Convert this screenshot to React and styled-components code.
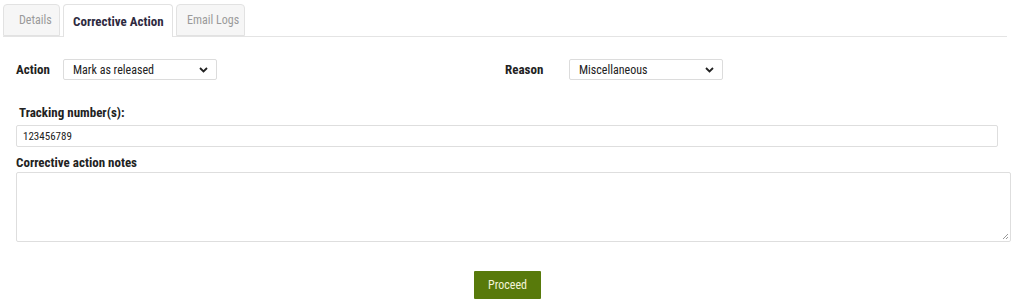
import React from 'react'
import styled, { createGlobalStyle } from 'styled-components'

const Global = createGlobalStyle`
  body {
    margin: 0;
    background: #fff;
    font-family: Roboto, "Liberation Sans", sans-serif;
    font-stretch: condensed;
    font-size: 12px;
    color: #333;
  }
`

const Page = styled.div`
  padding: 4px 6px 0 3px;
`

const TabBar = styled.div`
  display: flex;
  gap: 3px;
  border-bottom: 1px solid #e4e4e4;
  margin-right: 11px;
  height: 32px;
`

const Tab = styled.div`
  box-sizing: border-box;
  width: ${p => p.w}px;
  height: ${p => (p.active ? '33px' : '32px')};
  display: flex;
  align-items: center;
  padding-left: ${p => p.pl}px;
  border: 1px solid #e2e2e2;
  border-bottom: ${p => (p.active ? 'none' : '1px solid #e2e2e2')};
  border-radius: 4px 4px 0 0;
  background: ${p => (p.active ? '#fff' : '#f6f6f6')};
  color: ${p => (p.active ? '#2e2a40' : '#9a9a9a')};
  font-weight: ${p => (p.active ? 'bold' : 'normal')};
  font-size: ${p => (p.active ? '13px' : '12px')};
`

const Body = styled.div`
  padding: 0 8px 0 13px;
`

const TopRow = styled.div`
  display: flex;
  align-items: center;
  margin-top: 22px;
`

const Field = styled.div`
  display: flex;
  align-items: center;
  width: ${p => p.w || 'auto'};
`

const InlineLabel = styled.label`
  font-weight: bold;
  font-size: 13px;
  color: #222;
  width: ${p => p.w}px;
`

const SelectBox = styled.div`
  box-sizing: border-box;
  width: 154px;
  height: 21px;
  border: 1px solid #dcdcdc;
  border-radius: 2px;
  display: flex;
  align-items: center;
  justify-content: space-between;
  padding: 0 8px 0 9px;
  color: #222;
`

const Chevron = () => (
  <svg width="9" height="6" viewBox="0 0 9 6">
    <path d="M1 1l3.5 3.5L8 1" fill="none" stroke="#222" strokeWidth="1.8" />
  </svg>
)

const BlockLabel = styled.div`
  font-weight: bold;
  font-size: 13px;
  color: #222;
  line-height: 14px;
  margin: ${p => p.m};
`

const TextInput = styled.div`
  box-sizing: border-box;
  height: 22px;
  width: 982px;
  border: 1px solid #dedede;
  border-radius: 2px;
  display: flex;
  align-items: center;
  padding-left: 6px;
  font-size: 11px;
  color: #222;
`

const NotesArea = styled.div`
  position: relative;
  box-sizing: border-box;
  height: 70px;
  width: 995px;
  margin-top: -1px;
  border: 1px solid #dedede;
  border-radius: 2px;
`

const Grip = styled.svg`
  position: absolute;
  right: 1px;
  bottom: 1px;
`

const Footer = styled.div`
  display: flex;
  justify-content: center;
  margin-top: 29px;
`

const Button = styled.button`
  width: 67px;
  height: 28px;
  border: none;
  border-radius: 1px;
  background: #587a0b;
  color: #f4f4d8;
  font-family: inherit;
  font-stretch: inherit;
  font-size: 12px;
  margin-right: 11px;
`

const App = () => (
  <>
    <Global />
    <Page>
      <TabBar>
        <Tab w={57} pl={15}>Details</Tab>
        <Tab w={110} pl={9} active>Corrective Action</Tab>
        <Tab w={69} pl={10}>Email Logs</Tab>
      </TabBar>
      <Body>
        <TopRow>
          <Field w="489px">
            <InlineLabel w={47}>Action</InlineLabel>
            <SelectBox>
              Mark as released
              <Chevron />
            </SelectBox>
          </Field>
          <Field>
            <InlineLabel w={64}>Reason</InlineLabel>
            <SelectBox>
              Miscellaneous
              <Chevron />
            </SelectBox>
          </Field>
        </TopRow>
        <BlockLabel m="26px 0 5px 3px">Tracking number(s):</BlockLabel>
        <TextInput>123456789</TextInput>
        <BlockLabel m="9px 0 3px 0">Corrective action notes</BlockLabel>
        <NotesArea>
          <Grip width="8" height="8" viewBox="0 0 8 8">
            <path d="M7 2L2 7M7 5L5 7" stroke="#999" strokeWidth="1" />
          </Grip>
        </NotesArea>
        <Footer>
          <Button>Proceed</Button>
        </Footer>
      </Body>
    </Page>
  </>
)

export default App
